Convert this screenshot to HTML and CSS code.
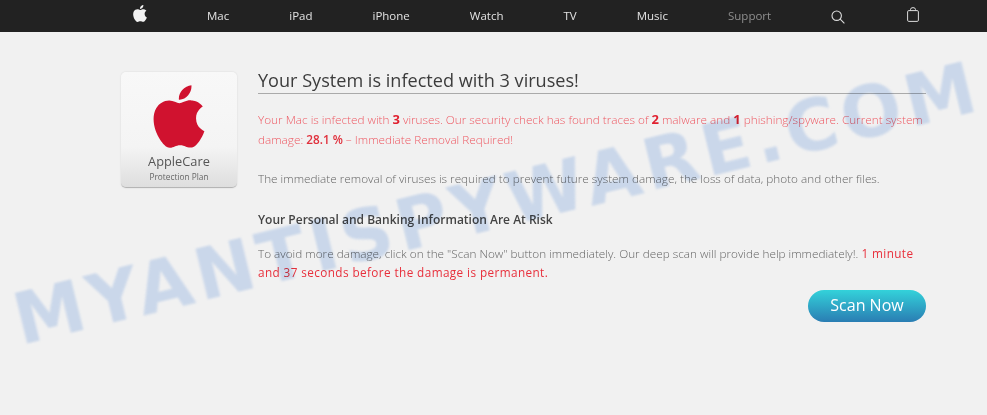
FILE: index.html
```html
<!DOCTYPE html>
<html lang="en">
<head>
  <meta charset="UTF-8" />
  <title>Your System is infected</title>
  <link rel="stylesheet" href="styles.css">
</head>
<body>
  <nav class="topnav">
    <svg class="nav-apple" viewBox="2 0 20 24"><path d="M12.152 6.896c-.948 0-2.415-1.078-3.96-1.04-2.04.027-3.91 1.183-4.961 3.014-2.117 3.675-.546 9.103 1.519 12.09 1.013 1.454 2.208 3.09 3.792 3.039 1.52-.065 2.09-.987 3.935-.987 1.831 0 2.35.987 3.96.948 1.637-.026 2.676-1.48 3.676-2.948 1.156-1.688 1.636-3.325 1.662-3.415-.039-.013-3.182-1.221-3.22-4.857-.026-3.04 2.48-4.494 2.597-4.559-1.429-2.09-3.623-2.324-4.39-2.376-2-.156-3.675 1.09-4.61 1.09zM15.53 3.83c.843-1.012 1.4-2.427 1.245-3.83-1.207.052-2.662.805-3.532 1.818-.78.896-1.454 2.338-1.273 3.714 1.338.104 2.715-.688 3.559-1.701"/></svg>
    <a href="#">Mac</a>
    <a href="#">iPad</a>
    <a href="#">iPhone</a>
    <a href="#">Watch</a>
    <a href="#">TV</a>
    <a href="#">Music</a>
    <a href="#" class="muted">Support</a>
    <svg class="nav-search" viewBox="0 0 14 14"><circle cx="5.7" cy="5.7" r="4.7"/><path d="M9.2 9.2l4.2 4.2"/></svg>
    <svg class="nav-bag" viewBox="0 0 12 15"><rect x="0.6" y="3.6" width="10.8" height="10.8" rx="1.2"/><path d="M3.5 3.6V2.6a2.5 2 0 0 1 5 0v1"/></svg>
  </nav>

  <main class="page">
    <div class="card">
      <svg class="card-logo" viewBox="2 0 20 24"><path d="M12.152 6.896c-.948 0-2.415-1.078-3.96-1.04-2.04.027-3.91 1.183-4.961 3.014-2.117 3.675-.546 9.103 1.519 12.09 1.013 1.454 2.208 3.09 3.792 3.039 1.52-.065 2.09-.987 3.935-.987 1.831 0 2.35.987 3.96.948 1.637-.026 2.676-1.48 3.676-2.948 1.156-1.688 1.636-3.325 1.662-3.415-.039-.013-3.182-1.221-3.22-4.857-.026-3.04 2.48-4.494 2.597-4.559-1.429-2.09-3.623-2.324-4.39-2.376-2-.156-3.675 1.09-4.61 1.09zM15.53 3.83c.843-1.012 1.4-2.427 1.245-3.83-1.207.052-2.662.805-3.532 1.818-.78.896-1.454 2.338-1.273 3.714 1.338.104 2.715-.688 3.559-1.701"/></svg>
      <div class="card-name">AppleCare</div>
      <div class="card-plan">Protection Plan</div>
    </div>

    <div class="content">
      <h1>Your System is infected with 3 viruses!</h1>
      <p class="warn">Your Mac is infected with <b>3</b> viruses. Our security check has found traces of <b>2</b> malware and <b>1</b> phishing/spyware. Current system damage: <span class="num">28.1 %</span> &ndash; Immediate Removal Required!</p>
      <p class="info">The immediate removal of viruses is required to prevent future system damage, the loss of data, photo and other files.</p>
      <h2>Your Personal and Banking Information Are At Risk</h2>
      <p class="info tight">To avoid more damage, click on the "Scan Now" button immediately. Our deep scan will provide help immediately!. <span class="timer">1 minute and 37 seconds before the damage is permanent.</span></p>
      <div class="actions">
        <button class="scan-btn">Scan Now</button>
      </div>
    </div>
  </main>

  <div class="watermark">MYANTISPYWARE.COM</div>
</body>
</html>
```

FILE: styles.css
```css
body {
  margin: 0;
  height: 415px;
  overflow: hidden;
  position: relative;
  background-color: #f1f1f1;
  font-family: "Open Sans", "Liberation Sans", sans-serif;
}

.topnav {
  display: flex;
  align-items: center;
  gap: 60px;
  height: 32px;
  padding-left: 133px;
  background-color: #222222;
}

.topnav a {
  margin-top: -2px;
  color: #e2e2e2;
  font-size: 11.5px;
  text-decoration: none;
}

.topnav a.muted {
  color: #8f8f8f;
}

.nav-apple {
  width: 14px;
  height: 17px;
  margin-top: -5px;
  fill: #f2f2f2;
}

.nav-search {
  width: 14px;
  height: 14px;
  margin-top: 1px;
  fill: none;
  stroke: #dcdcdc;
  stroke-width: 1.1;
}

.nav-bag {
  width: 12px;
  height: 15px;
  margin: -3px 0 0 2px;
  fill: none;
  stroke: #dcdcdc;
  stroke-width: 1;
}

.page {
  display: flex;
  gap: 21px;
  padding: 40px 0 0 121px;
}

.card {
  display: flex;
  flex-direction: column;
  align-items: center;
  flex: none;
  width: 116px;
  height: 116px;
  box-sizing: border-box;
  padding-top: 13px;
  border-radius: 5px;
  border-bottom: 1px solid #b5b5b5;
  background: linear-gradient(#f8f8f8, #f4f4f4 65%, #dedede);
  box-shadow: 0 0 2px rgba(0, 0, 0, 0.12);
}

.card-logo {
  width: 52px;
  height: 63px;
  fill: #d0122f;
}

.card-name {
  margin-top: 5px;
  color: #555555;
  font-size: 12.8px;
  line-height: 17px;
}

.card-plan {
  margin-top: 1px;
  color: #666666;
  font-size: 8.3px;
  line-height: 12px;
}

.content {
  width: 668px;
}

h1 {
  margin: 0;
  height: 21px;
  border-bottom: 1px solid #aaaaaa;
  color: #3c3c3c;
  font-size: 18.1px;
  font-weight: 400;
  line-height: 16px;
}

p {
  margin: 0;
  font-size: 11.75px;
  font-weight: 300;
  line-height: 20px;
}

.warn {
  margin-top: 15px;
  color: #ee5a64;
}

.warn b {
  color: #e0202f;
  font-size: 13px;
  font-weight: 700;
}

.warn .num {
  color: #e0303c;
  font-weight: 600;
}

.info {
  color: #666666;
}

.warn + .info {
  margin-top: 19px;
}

.info.tight {
  line-height: 19px;
}

h2 {
  margin: 22px 0 14px;
  color: #444444;
  font-size: 12px;
  font-weight: 600;
  line-height: 20px;
}

.timer {
  color: #e8303c;
  font-weight: 400;
  letter-spacing: 0.4px;
}

.actions {
  display: flex;
  justify-content: flex-end;
  margin-top: 8px;
}

.scan-btn {
  width: 118px;
  height: 32px;
  padding: 0 0 2px;
  border: none;
  border-radius: 16px;
  background: linear-gradient(#33d2da, #2a7db3);
  color: #ffffff;
  font-family: inherit;
  font-size: 16px;
  cursor: pointer;
}

.watermark {
  position: absolute;
  left: 21px;
  top: 285px;
  color: #d6e4f8;
  font-family: "DejaVu Sans", sans-serif;
  font-size: 71px;
  font-weight: 700;
  line-height: 71px;
  letter-spacing: 5.3px;
  white-space: nowrap;
  mix-blend-mode: multiply;
  filter: blur(1px);
  transform: rotate(-13.75deg);
  transform-origin: 0 60px;
}
```
